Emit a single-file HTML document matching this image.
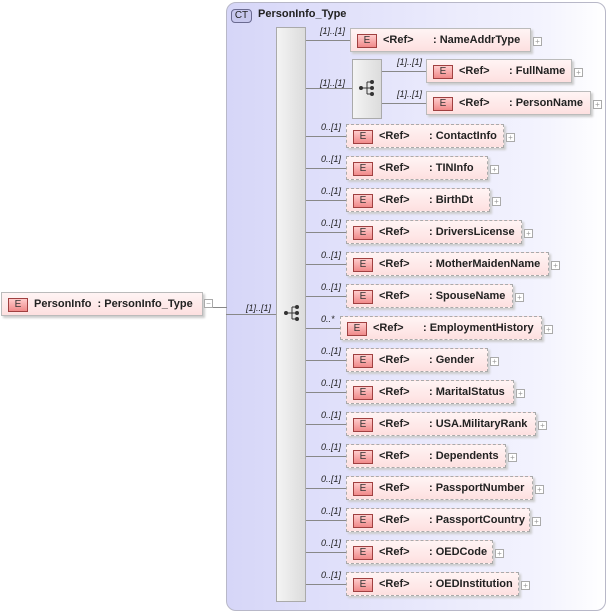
<!DOCTYPE html>
<html><head><meta charset="utf-8"><style>
*{margin:0;padding:0;box-sizing:border-box}
body{width:610px;height:614px;background:#fff;position:relative;overflow:hidden;font-family:"Liberation Sans",sans-serif;font-size:11px;font-weight:bold;color:#222}
.a{position:absolute}
.ct{left:226px;top:2px;width:380px;height:609px;border:1px solid #b8b8c8;border-radius:10px;background:linear-gradient(90deg,#d6d6f8,#f4f4fe 85%,#fff)}
.badge{border:1px solid #6a6a90;border-radius:4px;background:#c8c8ee;font-weight:normal;font-size:10px;text-align:center;line-height:12px}
.seq{background:linear-gradient(90deg,#f4f4f4,#dcdcdc);border:1px solid #aaa}
.el{height:24px;background:linear-gradient(#fff4f4,#fde0e0);border:1px solid #bbb;box-shadow:2px 2px 2px #ccc}
.el.d{border:1px dashed #aaa}
.E{position:absolute;left:6px;top:5px;width:20px;height:14px;border:1px solid #a04040;background:linear-gradient(#fcc,#f08a8a);font-weight:normal;font-size:10px;text-align:center;line-height:12px;color:#333}
.t{position:absolute;top:5px;white-space:nowrap}
.pl{width:9px;height:9px;border:1px solid #aaa;background:#fff;font-size:8px;line-height:7px;text-align:center;color:#999;font-weight:normal}
.ln{height:1px;background:#888}
.lb{font-style:italic;font-weight:normal;font-size:9px;color:#222}
</style></head><body>
<div class="a ct"></div>
<div class="a badge" style="left:231px;top:9px;width:21px;height:14px">CT</div>
<div class="a" style="left:258px;top:8px">PersonInfo_Type</div>
<div class="a seq" style="left:276px;top:27px;width:30px;height:575px"></div>
<svg class="a" style="left:283px;top:305px" width="18" height="16"><circle cx="3" cy="8" r="2" fill="#333"/><path d="M3 8H9M9 2V14M9 2H13M9 8H13M9 14H13" stroke="#333" fill="none"/><circle cx="14" cy="2" r="2" fill="#333"/><circle cx="14" cy="8" r="2" fill="#333"/><circle cx="14" cy="14" r="2" fill="#333"/></svg>
<div class="a el" style="left:1px;top:292px;width:202px;box-shadow:2px 2px 2px #ccc"><div class="E">E</div><div class="t" style="left:32px">PersonInfo&nbsp; : PersonInfo_Type</div></div>
<div class="a pl" style="left:204px;top:299px">−</div>
<div class="a ln" style="left:213px;top:307px;width:14px"></div>
<div class="a ln" style="left:226px;top:314px;width:50px"></div>
<div class="a lb" style="left:246px;top:303px">[1]..[1]</div>
<div class="a seq" style="left:352px;top:59px;width:30px;height:60px"></div>
<svg class="a" style="left:358px;top:80px" width="18" height="16"><circle cx="3" cy="8" r="2" fill="#333"/><path d="M3 8H9M9 2V14M9 2H13M9 8H13M9 14H13" stroke="#333" fill="none"/><circle cx="14" cy="2" r="2" fill="#333"/><circle cx="14" cy="8" r="2" fill="#333"/><circle cx="14" cy="14" r="2" fill="#333"/></svg>
<div id="r"></div>
<script>
var h='';
function box(l,t,r,name,dash,lab,lx,ll){
 h+='<div class="a ln" style="left:'+ll+'px;top:'+(t+12)+'px;width:'+(l-ll)+'px"></div>';
 h+='<div class="a lb" style="left:'+lx+'px;top:'+(t-2)+'px">'+lab+'</div>';
 h+='<div class="a el'+(dash?' d':'')+'" style="left:'+l+'px;top:'+t+'px;width:'+(r-l)+'px"><div class="E">E</div><div class="t" style="left:32px">&lt;Ref&gt;</div><div class="t" style="left:82px">: '+name+'</div></div>';
 h+='<div class="a pl" style="left:'+(r+2)+'px;top:'+(t+9)+'px">+</div>';
}
box(350,28,531,'NameAddrType',0,'[1]..[1]',320,306);
h+='<div class="a ln" style="left:306px;top:88px;width:46px"></div><div class="a lb" style="left:320px;top:78px">[1]..[1]</div>';
box(426,59,572,'FullName',0,'[1]..[1]',397,382);
box(426,91,591,'PersonName',0,'[1]..[1]',397,382);
var rows=[['ContactInfo',504],['TINInfo',488],['BirthDt',490],['DriversLicense',522],['MotherMaidenName',549],['SpouseName',513],['EmploymentHistory',542],['Gender',488],['MaritalStatus',514],['USA.MilitaryRank',536],['Dependents',506],['PassportNumber',533],['PassportCountry',530],['OEDCode',493],['OEDInstitution',519]];
rows.forEach(function(x,i){var t=124+i*32;var l=x[0]=='EmploymentHistory'?340:346;box(l,t,x[1],x[0],1,x[0]=='EmploymentHistory'?'0..*':'0..[1]',321,306);});
document.getElementById('r').innerHTML=h;
</script>
</body></html>
